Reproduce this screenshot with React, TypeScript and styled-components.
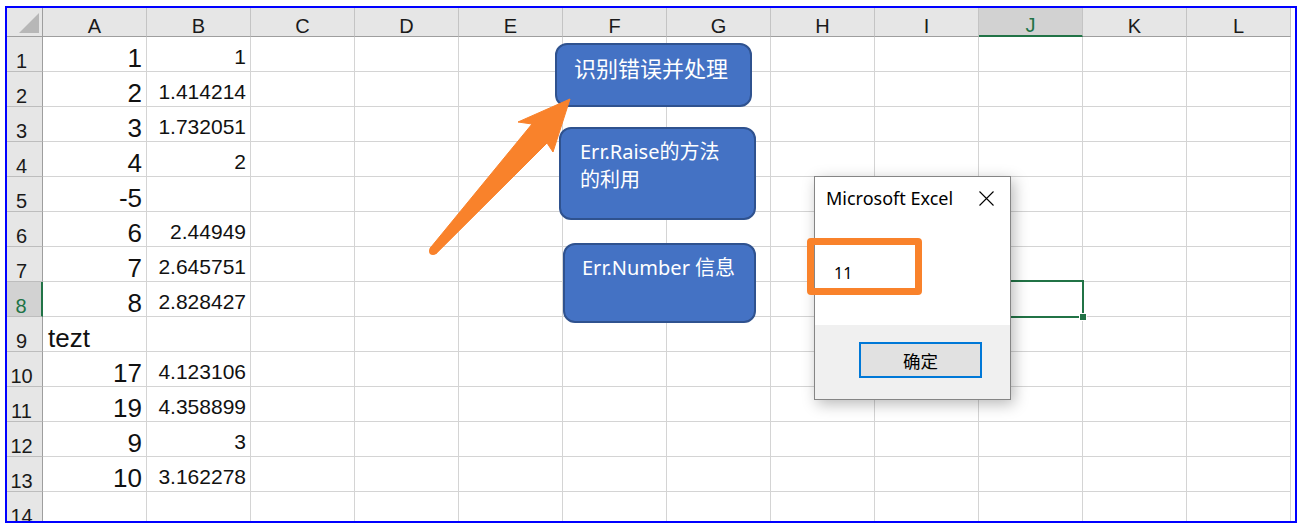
import React from 'react';
import styled, { createGlobalStyle } from 'styled-components';

const EXCEL_GREEN = '#217346';
const ORANGE = '#f9822b';

const GlobalStyle = createGlobalStyle`
  body {
    margin: 0;
    background: #fff;
  }
`;

const Page = styled.div`
  padding: 6px 0 0 5px;
`;

const Frame = styled.div`
  position: relative;
  box-sizing: border-box;
  width: 1292px;
  height: 517px;
  border: 2px solid #0000ff;
  overflow: hidden;
  background: #fff;
  font-family: 'Liberation Sans', Arial, sans-serif;
  color: #111;
`;

const Sheet = styled.div`
  display: grid;
  grid-template-columns: 36px repeat(12, 104px);
  grid-template-rows: 29px repeat(14, 35px);
`;

const Corner = styled.div`
  position: relative;
  box-sizing: border-box;
  background: #e6e6e6;
  border-right: 1px solid #9e9e9e;
  border-bottom: 1px solid #9e9e9e;

  &::after {
    content: '';
    position: absolute;
    right: 3px;
    bottom: 3px;
    border-style: solid;
    border-width: 0 0 20px 20px;
    border-color: transparent transparent #b7b7b7 transparent;
  }
`;

const ColHeader = styled.div<{ $active?: boolean }>`
  box-sizing: border-box;
  display: flex;
  align-items: flex-end;
  justify-content: center;
  font-size: 20px;
  line-height: 1;
  background: ${(p) => (p.$active ? '#d2d2d2' : '#e6e6e6')};
  color: ${(p) => (p.$active ? EXCEL_GREEN : '#1a1a1a')};
  border-right: 1px solid #c4c4c4;
  border-bottom: ${(p) => (p.$active ? `2px solid ${EXCEL_GREEN}` : '1px solid #9e9e9e')};
`;

const RowHeader = styled.div<{ $active?: boolean }>`
  box-sizing: border-box;
  display: flex;
  align-items: flex-end;
  justify-content: center;
  padding-right: 6px;
  font-size: 20px;
  line-height: 1;
  background: ${(p) => (p.$active ? '#d2d2d2' : '#e6e6e6')};
  color: ${(p) => (p.$active ? EXCEL_GREEN : '#1a1a1a')};
  border-bottom: 1px solid #bdbdbd;
  border-right: ${(p) => (p.$active ? `2px solid ${EXCEL_GREEN}` : '1px solid #9e9e9e')};
`;

const Cell = styled.div<{ $align?: 'left' | 'right'; $size?: number; $pad?: number }>`
  box-sizing: border-box;
  display: flex;
  align-items: flex-end;
  justify-content: ${(p) => (p.$align === 'left' ? 'flex-start' : 'flex-end')};
  padding: 0 4px ${(p) => p.$pad ?? 0}px 5px;
  font-size: ${(p) => p.$size ?? 21}px;
  line-height: 1;
  white-space: nowrap;
  border-right: 1px solid #d4d4d4;
  border-bottom: 1px solid #d4d4d4;
`;

const Overlay = styled.svg`
  position: absolute;
  left: 0;
  top: 0;
  pointer-events: none;
`;

const Shape = styled.div<{ $left: number; $top: number; $w: number; $h: number; $pl: number; $size?: number }>`
  position: absolute;
  left: ${(p) => p.$left}px;
  top: ${(p) => p.$top}px;
  width: ${(p) => p.$w}px;
  height: ${(p) => p.$h}px;
  box-sizing: border-box;
  padding: 9px 8px 0 ${(p) => p.$pl}px;
  background: #4472c4;
  border: 2px solid #2f528f;
  border-radius: 12px;
  color: #fff;
  font-family: 'Noto Sans', 'Noto Sans CJK SC', sans-serif;
  font-size: ${(p) => p.$size ?? 20}px;
  line-height: 28px;
`;

const Selection = styled.div`
  position: absolute;
  left: 970px;
  top: 272px;
  width: 107px;
  height: 38px;
  box-sizing: border-box;
  border: 2px solid ${EXCEL_GREEN};

  &::after {
    content: '';
    position: absolute;
    right: -5px;
    bottom: -5px;
    width: 6px;
    height: 6px;
    background: ${EXCEL_GREEN};
    border: 1px solid #fff;
  }
`;

const Dialog = styled.div`
  position: absolute;
  left: 807px;
  top: 168px;
  width: 197px;
  height: 224px;
  box-sizing: border-box;
  display: flex;
  flex-direction: column;
  background: #fff;
  border: 1px solid #858585;
  box-shadow: 3px 4px 14px rgba(0, 0, 0, 0.28);
  font-family: 'Noto Sans', 'Noto Sans CJK SC', sans-serif;
  color: #000;
`;

const TitleBar = styled.div`
  display: flex;
  justify-content: space-between;
  align-items: flex-start;
  height: 44px;
  padding: 9px 16px 0 11px;
  box-sizing: border-box;
  font-size: 18px;
  line-height: 24px;
`;

const CloseIcon = styled.svg`
  margin-top: 5px;
`;

const Body = styled.div`
  flex: 1;
  padding: 42px 0 0 19px;
  font-size: 16px;
  line-height: 20px;
`;

const Footer = styled.div`
  height: 74px;
  box-sizing: border-box;
  padding: 17px 0 0 44px;
  background: #f0f0f0;
`;

const OkButton = styled.button`
  width: 123px;
  height: 36px;
  box-sizing: border-box;
  border: 2px solid #0078d7;
  background: #e1e1e1;
  font-family: 'Noto Sans CJK SC', sans-serif;
  font-size: 17.5px;
  color: #000;
  padding: 0;
`;

const Highlight = styled.div`
  position: absolute;
  left: -8px;
  top: 61px;
  width: 115px;
  height: 57px;
  box-sizing: border-box;
  border: 7px solid ${ORANGE};
  border-radius: 4px;
`;

const COLS = ['A', 'B', 'C', 'D', 'E', 'F', 'G', 'H', 'I', 'J', 'K', 'L'];

const ROWS: [string, string][] = [
  ['1', '1'],
  ['2', '1.414214'],
  ['3', '1.732051'],
  ['4', '2'],
  ['-5', ''],
  ['6', '2.44949'],
  ['7', '2.645751'],
  ['8', '2.828427'],
  ['tezt', ''],
  ['17', '4.123106'],
  ['19', '4.358899'],
  ['9', '3'],
  ['10', '3.162278'],
  ['', ''],
];

export default function App() {
  return (
    <Page>
      <GlobalStyle />
      <Frame>
        <Sheet>
          <Corner />
          {COLS.map((c) => (
            <ColHeader key={c} $active={c === 'J'}>
              {c}
            </ColHeader>
          ))}
          {ROWS.map(([a, b], i) => (
            <React.Fragment key={i}>
              <RowHeader $active={i === 7}>{i + 1}</RowHeader>
              <Cell $size={26} $align={a === 'tezt' ? 'left' : 'right'}>
                {a}
              </Cell>
              <Cell $size={21} $pad={4}>
                {b}
              </Cell>
              {COLS.slice(2).map((c) => (
                <Cell key={c} />
              ))}
            </React.Fragment>
          ))}
        </Sheet>

        <Shape $left={548} $top={35} $w={197} $h={64} $pl={17} $size={22}>
          识别错误并处理
        </Shape>
        <Shape $left={552} $top={119} $w={197} $h={93} $pl={19}>
          Err.Raise的方法
          <br />
          的利用
        </Shape>
        <Shape $left={556} $top={235} $w={193} $h={80} $pl={17}>
          Err.Number 信息
        </Shape>

        <Overlay width={1288} height={513} viewBox="7 8 1288 513">
          <circle cx={433} cy={251} r={4} fill={ORANGE} />
          <polygon
            points="430,248.3 532,124 518,122 570,99 553,152 547,143 436,253.7"
            fill={ORANGE}
            stroke={ORANGE}
            strokeWidth={1}
            strokeLinejoin="round"
          />
        </Overlay>

        <Selection />

        <Dialog>
          <TitleBar>
            <span>Microsoft Excel</span>
            <CloseIcon width={15} height={15} viewBox="0 0 15 15">
              <path d="M0.5 0.5 L14.5 14.5 M14.5 0.5 L0.5 14.5" stroke="#000" strokeWidth={1.1} />
            </CloseIcon>
          </TitleBar>
          <Body>11</Body>
          <Footer>
            <OkButton>确定</OkButton>
          </Footer>
          <Highlight />
        </Dialog>
      </Frame>
    </Page>
  );
}
